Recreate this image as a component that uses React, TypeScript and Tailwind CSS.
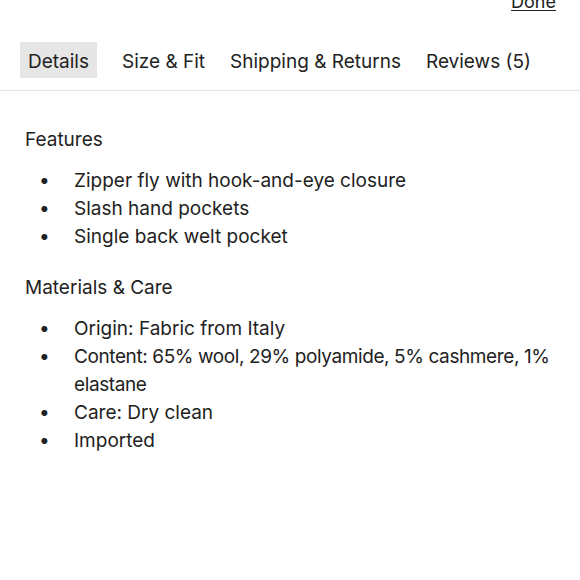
export default function App() {
  const features = [
    "Zipper fly with hook-and-eye closure",
    "Slash hand pockets",
    "Single back welt pocket",
  ];
  const materials = [
    { text: "Origin: Fabric from Italy", cls: "" },
    { text: "Content: 65% wool, 29% polyamide, 5% cashmere, 1% elastane", cls: "tracking-[-0.4px]" },
    { text: "Care: Dry clean", cls: "" },
    { text: "Imported", cls: "" },
  ];
  const tabs = ["Details", "Size & Fit", "Shipping & Returns", "Reviews (5)"];

  return (
    <main
      className="w-[580px] h-[580px] overflow-hidden bg-white text-[#222]"
      style={{ fontFamily: "Inter, 'Noto Sans', sans-serif" }}
    >
      <div className="flex justify-end pr-[24px] -mt-[10px] h-[24px]">
        <span className="text-[18px] leading-[24px] underline underline-offset-2">Done</span>
      </div>

      <div className="flex items-center gap-[25px] px-[20px] mt-[28px] border-b border-[#e3e3e3] pb-[12px]">
        {tabs.map((t, i) => (
          <span
            key={t}
            className={
              "text-[19px] leading-[36px] h-[36px] pt-[2px] " +
              (i === 0 ? "bg-[#e6e6e6] px-[8px]" : "")
            }
          >
            {t}
          </span>
        ))}
      </div>

      <section className="pl-[25px] pr-[20px] pt-[36px]">
        <h2 className="text-[19px] leading-[26px]">Features</h2>
        <ul className="mt-[14px]">
          {features.map((f) => (
            <li key={f} className="flex text-[19px] leading-[28px]">
              <span className="w-[49px] shrink-0 pl-[14px]">•</span>
              <span>{f}</span>
            </li>
          ))}
        </ul>

        <h2 className="text-[19px] leading-[26px] mt-[24px]">Materials &amp; Care</h2>
        <ul className="mt-[14px]">
          {materials.map((f) => (
            <li key={f.text} className="flex text-[19px] leading-[28px]">
              <span className="w-[49px] shrink-0 pl-[14px]">•</span>
              <span className={f.cls}>{f.text}</span>
            </li>
          ))}
        </ul>
      </section>
    </main>
  );
}
